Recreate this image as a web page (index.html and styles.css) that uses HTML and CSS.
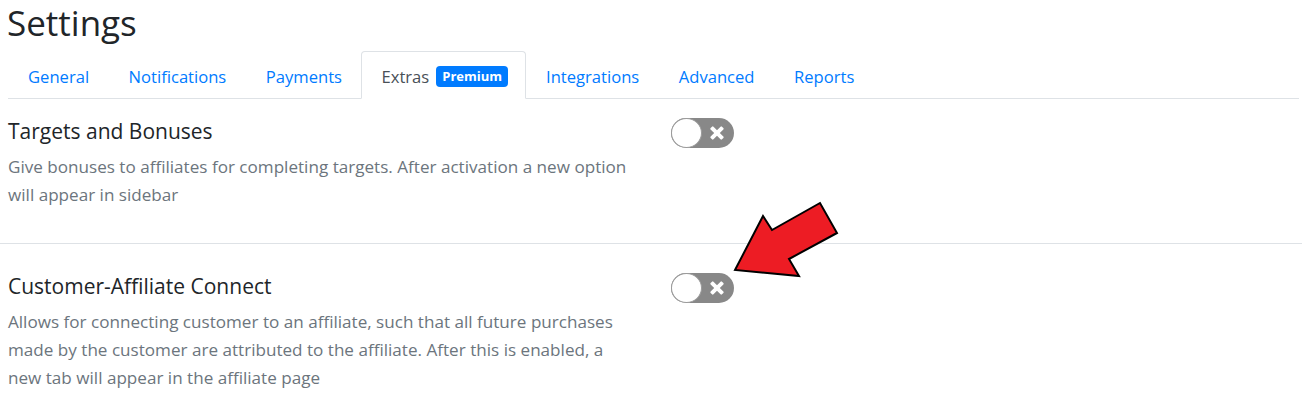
FILE: index.html
```html
<!DOCTYPE html>
<html lang="en">
<head>
<meta charset="utf-8">
<title>Settings</title>
<link rel="stylesheet" href="styles.css">
</head>
<body>
<div class="page">
  <h1 class="title">Settings</h1>
  <nav class="tabs">
    <a class="tab" href="#">General</a>
    <a class="tab" href="#">Notifications</a>
    <a class="tab" href="#">Payments</a>
    <a class="tab active" href="#">Extras <span class="badge">Premium</span></a>
    <a class="tab" href="#">Integrations</a>
    <a class="tab" href="#">Advanced</a>
    <a class="tab" href="#">Reports</a>
  </nav>
  <section class="option first">
    <div class="text">
      <h2 class="opt-title">Targets and Bonuses</h2>
      <p class="opt-desc">Give bonuses to affiliates for completing targets. After activation a new option will appear in sidebar</p>
    </div>
    <div class="switch"><span class="knob"></span><span class="cross"></span></div>
  </section>
  <section class="option">
    <div class="text">
      <h2 class="opt-title">Customer-Affiliate Connect</h2>
      <p class="opt-desc">Allows for connecting customer to an affiliate, such that all future purchases made by the customer are attributed to the affiliate. After this is enabled, a new tab will appear in the affiliate page</p>
    </div>
    <div class="switch"><span class="knob"></span><span class="cross"></span></div>
  </section>
  <svg class="arrow" width="110" height="80" viewBox="0 0 110 80" aria-hidden="true">
    <polygon points="3,72 31,18 40,32 88,5 105,35 57,61 67,78" fill="#ed1c24" stroke="#000" stroke-width="2" stroke-linejoin="miter"/>
  </svg>
</div>
</body>
</html>
```
FILE: styles.css
```css
* { box-sizing: border-box; }
html, body { margin: 0; padding: 0; background: #fff; }
body {
  font-family: "Open Sans", "Noto Sans", sans-serif;
  font-size: 16px;
  color: #212529;
}
.page { position: relative; width: 1302px; }
.title {
  margin: 0;
  padding: 2px 0 0 7px;
  height: 51px;
  font-size: 35px;
  font-weight: 400;
  line-height: 42px;
  color: #212529;
}
.tabs {
  display: flex;
  margin: 0 3px 0 8px;
  border-bottom: 1px solid #dee2e6;
  height: 48px;
}
.tab {
  display: flex;
  align-items: center;
  gap: 7px;
  padding: 3px 18.5px 0 19px;
  height: 48px;
  font-size: 16.6px;
  color: #007bff;
  text-decoration: none;
  border: 1px solid transparent;
  border-top-left-radius: 4px;
  border-top-right-radius: 4px;
}
.tab.active {
  color: #495057;
  background: #fff;
  border-color: #dee2e6 #dee2e6 #fff;
  padding-right: 17px;
}
.badge {
  display: inline-block;
  background: #007bff;
  color: #fff;
  font-size: 13px;
  font-weight: 700;
  line-height: 21px;
  padding: 0 6px;
  border-radius: 4px;
}
.option {
  display: grid;
  grid-template-columns: 632px 63px;
  column-gap: 31px;
  align-items: start;
  padding: 30px 8px 34px;
  border-bottom: 1px solid #dee2e6;
}
.option.first { padding-top: 20px; }
.option:last-of-type { border-bottom: none; }
.opt-title {
  margin: 0 0 10px;
  font-size: 21px;
  font-weight: 400;
  line-height: 24px;
  color: #212529;
}
.opt-desc {
  margin: 0;
  font-size: 17.1px;
  line-height: 28px;
  color: #6c757d;
}
.switch {
  position: relative;
  width: 63px;
  height: 30px;
  margin-top: -1px;
  border-radius: 15px;
  background: #888;
}
.knob {
  position: absolute;
  left: 0;
  top: 0;
  width: 31px;
  height: 30px;
  border-radius: 50%;
  background: #fff;
  border: 1px solid #9a9a9a;
}
.cross {
  position: absolute;
  left: 39px;
  top: 8px;
  width: 14px;
  height: 14px;
}
.cross::before, .cross::after {
  content: "";
  position: absolute;
  left: 5px;
  top: -1px;
  width: 4px;
  height: 16px;
  background: #fff;
  border-radius: 1px;
}
.cross::before { transform: rotate(45deg); }
.cross::after { transform: rotate(-45deg); }
.arrow {
  position: absolute;
  left: 732px;
  top: 198px;
}
```
